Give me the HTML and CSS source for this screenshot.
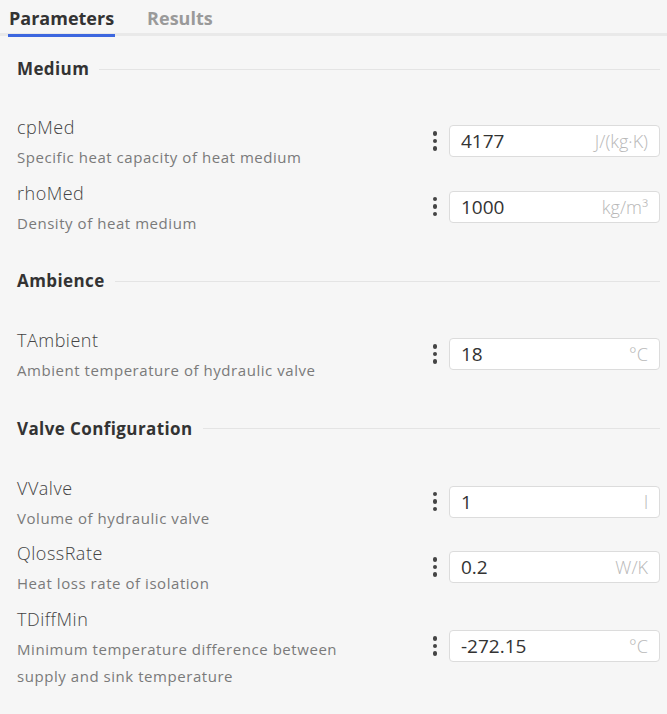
FILE: index.html
```html
<!DOCTYPE html>
<html lang="en">
	<head>
		<meta charset="UTF-8" />
		<title>Hydraulic valve</title>
		<link rel="stylesheet" href="styles.css">
	</head>
	<body>
		<div class="panel">
			<div class="tabs">
				<span class="tab active">Parameters</span>
				<span class="tab">Results</span>
			</div>

			<div class="group">
				<div class="group-title"><span>Medium</span></div>
				<div class="param">
					<div class="info">
						<div class="name">cpMed</div>
						<div class="desc">Specific heat capacity of heat medium</div>
					</div>
					<span class="menu"><i></i><i></i><i></i></span>
					<label class="field"><input type="text" value="4177" /><span class="unit">J/(kg·K)</span></label>
				</div>
				<div class="param">
					<div class="info">
						<div class="name">rhoMed</div>
						<div class="desc">Density of heat medium</div>
					</div>
					<span class="menu"><i></i><i></i><i></i></span>
					<label class="field"><input type="text" value="1000" /><span class="unit">kg/m³</span></label>
				</div>
			</div>

			<div class="group">
				<div class="group-title"><span>Ambience</span></div>
				<div class="param">
					<div class="info">
						<div class="name">TAmbient</div>
						<div class="desc">Ambient temperature of hydraulic valve</div>
					</div>
					<span class="menu"><i></i><i></i><i></i></span>
					<label class="field"><input type="text" value="18" /><span class="unit">°C</span></label>
				</div>
			</div>

			<div class="group">
				<div class="group-title"><span>Valve Configuration</span></div>
				<div class="param">
					<div class="info">
						<div class="name">VValve</div>
						<div class="desc">Volume of hydraulic valve</div>
					</div>
					<span class="menu"><i></i><i></i><i></i></span>
					<label class="field"><input type="text" value="1" /><span class="unit">l</span></label>
				</div>
				<div class="param">
					<div class="info">
						<div class="name">QlossRate</div>
						<div class="desc">Heat loss rate of isolation</div>
					</div>
					<span class="menu"><i></i><i></i><i></i></span>
					<label class="field"><input type="text" value="0.2" /><span class="unit">W/K</span></label>
				</div>
				<div class="param">
					<div class="info">
						<div class="name">TDiffMin</div>
						<div class="desc">Minimum temperature difference between supply and sink temperature</div>
					</div>
					<span class="menu"><i></i><i></i><i></i></span>
					<label class="field"><input type="text" value="-272.15" /><span class="unit">°C</span></label>
				</div>
			</div>
		</div>
	</body>
</html>
```

FILE: styles.css
```css
html, body{
	margin: 0;
	background: #f6f6f6;
}
body{
	font-family: "Open Sans", "Liberation Sans", sans-serif;
	color: #333;
}
.panel{
	width: 667px;
}

/* tab strip */
.tabs{
	display: flex;
	gap: 31px;
	padding: 0 0 0 8px;
	border-bottom: 3px solid #e9e9e9;
	height: 33px;
}
.tab{
	font-size: 18px;
	font-weight: 700;
	line-height: 40px;
	color: #9a9a9a;
	padding: 0 1px;
	margin-top: -2px;
	height: 36px;
}
.tab.active{
	color: #333;
	border-bottom: 3px solid #3d67df;
}

/* parameter groups */
.group{
	padding: 0 7px 0 17px;
}
.group-title{
	display: flex;
	align-items: center;
	gap: 10px;
	font-size: 17px;
	font-weight: 700;
	letter-spacing: 0.4px;
	line-height: 24px;
	margin: 32.5px 0 36px;
	color: #333;
}
.tabs + .group .group-title{
	margin: 21px 0 35px;
}
.group-title::after{
	content: "";
	flex: 1;
	height: 1px;
	background: #e4e4e4;
}

.param{
	display: flex;
	align-items: center;
	margin-bottom: 10.5px;
}
.info{
	flex: 1;
	padding-right: 60px;
}
.name{
	font-size: 18px;
	font-weight: 300;
	letter-spacing: 0.5px;
	line-height: 26px;
	color: #444;
	margin-top: -2px;
}
.desc{
	margin-top: 4px;
	font-size: 15px;
	letter-spacing: 0.55px;
	line-height: 27px;
	color: #7a7a7a;
	max-width: 345px;
}

/* kebab menu */
.menu{
	display: flex;
	flex-direction: column;
	gap: 3px;
	margin: -5px 12px 0 0;
}
.menu i{
	display: block;
	width: 4.5px;
	height: 4.5px;
	border-radius: 50%;
	background: #444;
}

.field{
	display: flex;
	align-items: center;
	width: 211px;
	height: 32px;
	margin-top: -5px;
	box-sizing: border-box;
	border: 1px solid #dcdcdc;
	border-radius: 4px;
	background: #fff;
	padding: 0 11px 0 11px;
}
.field input{
	flex: 1;
	min-width: 0;
	border: 0;
	outline: none;
	background: transparent;
	padding: 0;
	font: 19px "Open Sans", sans-serif;
	color: #333;
}
.field .unit{
	font-size: 18px;
	font-weight: 300;
	color: #b8b8b8;
}
```
